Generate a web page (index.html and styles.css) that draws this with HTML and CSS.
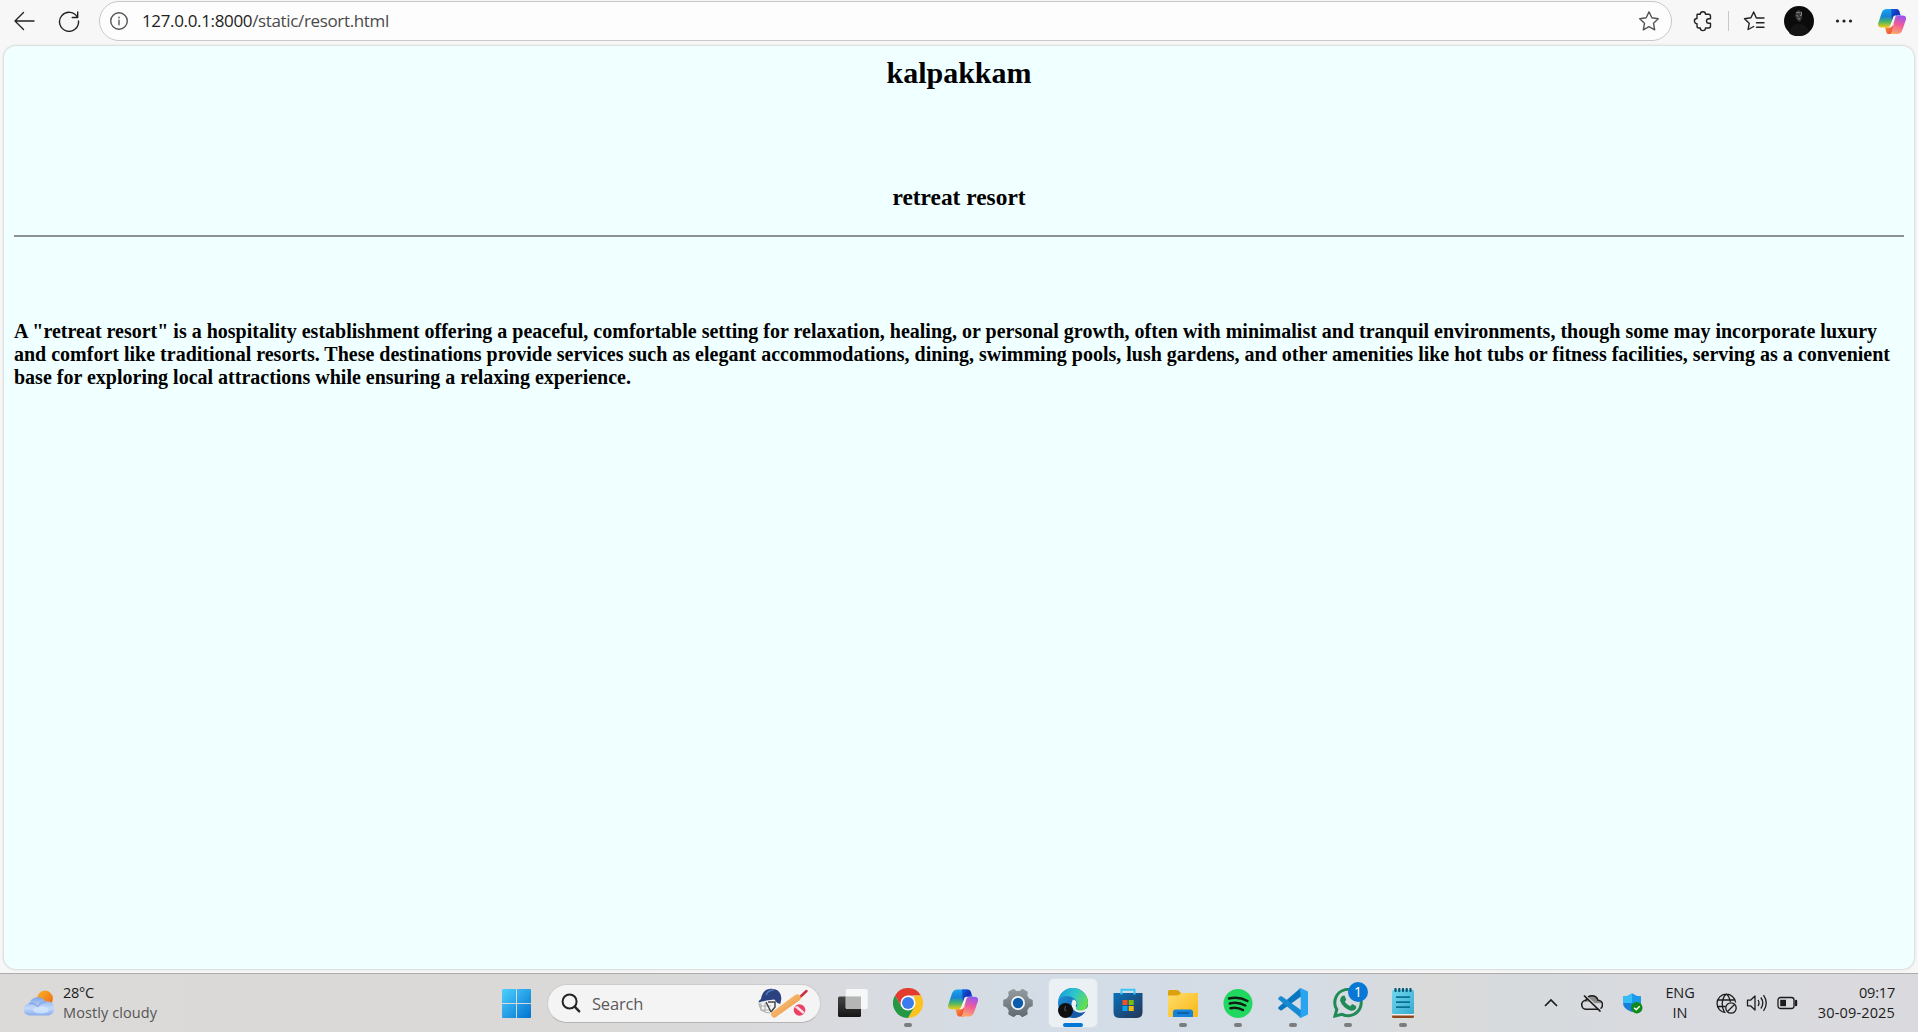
FILE: index.html
```html
<!DOCTYPE html>
<html lang="en">
<head>
<meta charset="utf-8">
<title>resort</title>
<link rel="stylesheet" href="styles.css">
</head>
<body>
<svg class="defs" aria-hidden="true">
  <defs>
    <linearGradient id="cpA" x1="0" y1="0" x2="0" y2="1"><stop offset="0" stop-color="#18a5f2"/><stop offset=".4" stop-color="#1683d8"/><stop offset=".68" stop-color="#45b56b"/><stop offset="1" stop-color="#f2cb12"/></linearGradient>
    <linearGradient id="cpB" x1=".6" y1="0" x2=".3" y2="1"><stop offset="0" stop-color="#9c55ee"/><stop offset=".45" stop-color="#ef5b9b"/><stop offset="1" stop-color="#ffad67"/></linearGradient>
    <linearGradient id="cpC" x1="0" y1="0" x2="1" y2="1"><stop offset="0" stop-color="#1462da"/><stop offset=".5" stop-color="#102fb8"/><stop offset="1" stop-color="#2480e8"/></linearGradient>
    <linearGradient id="cpD" x1="0" y1="0" x2="1" y2="1"><stop offset="0" stop-color="#ffb035"/><stop offset="1" stop-color="#e93c3c"/></linearGradient>
    <symbol id="copilot" viewBox="0 0 30 28">
      <path fill="url(#cpA)" d="M9.500.5H19c2 0 2.700 1 2.300 3L16.500 16.500c-1 2.700-2.500 3.800-5 3.800H3.500C.5 20.300-.5 18.300.3 15.500L4 4.500C5 1.700 6.700.5 9.500.5Z"/>
      <path fill="url(#cpC)" d="M14 .5h5.500c2 0 3 1 3.600 3l1.300 4.200h-4c-2 0-3 .8-3.700 2.600L15 14.500Z"/>
      <path fill="url(#cpD)" d="M7.500 20.300h4c1.500 0 2.500-.7 3.200-1.800l1.500-3.800L16 27.500h-4.700c-1.300 0-2-.9-2.400-2Z"/>
      <path fill="url(#cpB)" d="M20.500 27.500h-9c2 0 2.700-1 3.300-3L18 11.500c.9-2.700 2-3.800 4.500-3.800h4c3 0 4.200 2 3.300 4.800L26 23.500c-1 2.800-2.700 4-5.500 4Z"/>
      <path class="copilot-gap" d="M20 7.700h-1.500c-1.300 0-2 .8-2.500 2.200L13.800 16.500c-.9 2.300-1.700 3.800-3.300 3.800h2.500c1.600 0 2.600-1.300 3.100-3l2-6.500c.5-1.700 1-2.600 1.900-3.100Z"/>
    </symbol>
  </defs>
</svg>
<header class="toolbar">
  <svg class="ic back" width="22" height="20" viewBox="0 0 22 20"><path d="M10.500 1.500 2 10l8.500 8.500M2 10h19"/></svg>
  <svg class="ic reload" width="22" height="22" viewBox="0 0 22 22"><path d="M19.500 7.500A9.500 9.500 0 1 0 20.500 11M19.700 2v5.500h-5.500"/></svg>
  <div class="address">
    <svg class="ic info" width="20" height="20" viewBox="0 0 20 20"><circle cx="10" cy="10" r="8.300"/><path d="M10 9.200v4.600M10 6.100v.8"/></svg>
    <span class="url">127.0.0.1:8000<span class="path">/static/resort.html</span></span>
    <svg class="ic star" width="22" height="22" viewBox="0 0 22 22"><path d="m11 1.800 2.800 6 6.500.9-4.800 4.600 1.200 6.500-5.700-3.200-5.700 3.200 1.200-6.500L1.700 8.700l6.500-.9Z"/></svg>
  </div>
  <svg class="ic ext" width="20" height="22" viewBox="0 0 20 22"><path d="M4.500 4.300H7.300A2.600 2.600 0 0 1 12.500 4.300H15.500Q17.500 4.300 17.500 6.300V8.700H15.800A2.300 2.300 0 0 0 15.800 13.300H17.500V16Q17.500 18 15.500 18H12.500A2.600 2.600 0 0 1 7.300 18H6Q4 18 4 16V13.700A2.600 2.600 0 0 1 4 8.500V5Q4 4.300 4.500 4.300Z"/></svg>
  <span class="divider"></span>
  <svg class="ic favs" width="22" height="22" viewBox="0 0 22 22"><path d="M13.200 7.800 10.700 2 7.900 7.800 1.500 8.700l4.700 4.600-1.100 6.200 5.600-3M13.500 8h7.500M13.500 12.700H21M13.500 17.200H21"/></svg>
  <svg class="avatar" width="30" height="30" viewBox="0 0 30 30"><circle cx="15" cy="15" r="15" fill="#0b0b0c"/><path d="M5 27q2-9 10-9t10 8a15 15 0 0 1-20 1" fill="#151516"/><path d="m12 6 3-2 3 2v6l-2 4-3-2-2-4z" fill="#39393a"/><path d="m12 7 2-1 2 1M12.500 9.500l2 .8M16 9.500h1.500M14 13l2-.5M17.500 6v3" stroke="#888" fill="none"/></svg>
  <svg class="dots" width="18" height="6" viewBox="0 0 18 6"><g fill="#222"><circle cx="2.500" cy="3" r="1.600"/><circle cx="9" cy="3" r="1.600"/><circle cx="15.500" cy="3" r="1.600"/></g></svg>
  <svg class="side-copilot" width="28" height="27"><use href="#copilot"/></svg>
</header>

<main class="page">
  <h2>kalpakkam</h2>
  <h3>retreat resort</h3>
  <hr>
  <h4>A "retreat resort" is a hospitality establishment offering a peaceful, comfortable setting for relaxation, healing, or personal growth, often with minimalist and tranquil environments, though some may incorporate luxury and comfort like traditional resorts. These destinations provide services such as elegant accommodations, dining, swimming pools, lush gardens, and other amenities like hot tubs or fitness facilities, serving as a convenient base for exploring local attractions while ensuring a relaxing experience.</h4>
</main>

<footer class="taskbar">
  <div class="weather">
    <svg width="30" height="26" viewBox="0 0 30 26"><defs><linearGradient id="sun" x1="0" y1="0" x2="1" y2="1"><stop offset="0" stop-color="#f8b62c"/><stop offset="1" stop-color="#ed6410"/></linearGradient><linearGradient id="cl" x1="0" y1="0" x2="0" y2="1"><stop offset="0" stop-color="#80a4e8"/><stop offset=".6" stop-color="#c4daf9"/><stop offset="1" stop-color="#89acef"/></linearGradient></defs><circle cx="21" cy="8.500" r="7.900" fill="url(#sun)"/><path fill="url(#cl)" d="M6 25.500a6 6 0 0 1-.8-12A9 9 0 0 1 21.500 11.500 7 7 0 0 1 25 25.500Z"/><path d="M5 14q5-2 9 3 2-5 8-5" fill="none" stroke="#80a3e5" stroke-width="1.200"/><ellipse cx="17" cy="20" rx="8" ry="3.500" fill="#d9e9fc" opacity=".7"/></svg>
    <div class="weather-text"><span class="temp">28°C</span><span class="sky">Mostly cloudy</span></div>
  </div>
  <svg class="start" width="29" height="29" viewBox="0 0 29 29"><defs><linearGradient id="win" gradientUnits="userSpaceOnUse" x1="0" y1="0" x2="29" y2="29"><stop offset="0" stop-color="#4fd1ff"/><stop offset="1" stop-color="#0072d0"/></linearGradient></defs><path fill="url(#win)" d="M1 0H14V14H0V1Q0 0 1 0ZM15 0H28Q29 0 29 1V14H15ZM0 15H14V29H1Q0 29 0 28ZM15 15H29V28Q29 29 28 29H15Z"/></svg>
  <div class="search">
    <svg width="20" height="20" viewBox="0 0 20 20"><circle cx="8.600" cy="8.500" r="7" fill="none" stroke="#242424" stroke-width="2"/><path d="m13.700 13.700 4.500 4.600" stroke="#242424" stroke-width="2.400" stroke-linecap="round"/></svg>
    <span class="hint">Search</span>
    <svg class="cricket" width="50" height="30" viewBox="0 0 50 30"><defs><linearGradient id="bat" x1="0" y1="0" x2="1" y2="1"><stop offset="0" stop-color="#ffd18b"/><stop offset="1" stop-color="#e78b37"/></linearGradient></defs><path d="M1 15q1 10 11 10M3 15v7M7 15v9M1 18h12M2 22h11" fill="none" stroke="#aeb2b2" stroke-width="1.200"/><path d="m8 14 5 10M10 14h7v5l-4 5" fill="none" stroke="#44484b" stroke-width="1.500"/><path fill="#2a4380" d="M3 11C4 5 7 1 13 .8 20 .7 23.500 5 23.300 11l-1 5-3-1-3-3.500-8 1-7.500 2Q0 13 3 11Z"/><path d="M8 7q2-5 8-5" stroke="#5877b7" stroke-width="1.500" fill="none"/><path d="m41 10 7.500-7" stroke="#cf2942" stroke-width="2.400" stroke-linecap="round"/><path fill="url(#bat)" d="m13 25 24-18 3-1 3 3-1 3-24 17q-3 2-5-2Z"/><circle cx="41.500" cy="22" r="5.800" fill="#eb4262"/><path d="m36.500 19 8.500 7 1.500-2-7-6Z" fill="#ffe0ed"/></svg>
  </div>
  <nav class="apps">
    <div class="app"><svg width="30" height="30" viewBox="0 0 30 30"><defs><linearGradient id="tv" x1="0" y1="0" x2="0" y2="1"><stop offset="0" stop-color="#454545"/><stop offset="1" stop-color="#161616"/></linearGradient></defs><rect y="8.500" width="23" height="20.500" rx="1.500" fill="url(#tv)"/><rect x="7.700" y="1" width="22" height="20" rx="1.500" fill="#fafafa" opacity=".9"/><path d="M7.700 8.500H23V21H9q-1.300 0-1.300-1.300Z" fill="#b5b5b5"/></svg></div>
    <div class="app running"><svg width="30" height="30" viewBox="0 0 30 30"><path fill="#e33b2e" d="M2 7.500A15 15 0 0 1 28 7.500H15L8.500 18.700Z"/><path fill="#fcc31e" d="M28 7.500A15 15 0 0 1 15 30L21.500 18.700V7.500Z"/><path fill="#269745" d="M2 7.500A15 15 0 0 0 15 30L21.500 18.700H8.500Z"/><circle cx="15" cy="15" r="7.500" fill="#fff"/><circle cx="15" cy="15" r="6" fill="#3b7cec"/></svg></div>
    <div class="app"><svg width="30" height="28"><use href="#copilot"/></svg></div>
    <div class="app"><svg width="30" height="30" viewBox="0 0 30 30"><defs><linearGradient id="gear" x1="0" y1="0" x2="0" y2="1"><stop offset="0" stop-color="#929a9f"/><stop offset="1" stop-color="#626b71"/></linearGradient></defs><path fill="url(#gear)" stroke="url(#gear)" stroke-width="1.500" stroke-linejoin="round" d="m10.500 1.700 2.500 2h4l2.500-2 4.500 2.500-.5 3.500 2 3.300 3.500 1.500v5l-3.500 1.500-2 3.300.5 3.500-4.500 2.500-2.500-2h-4l-2.500 2L6 25.800l.5-3.500-2-3.300L1 17.500v-5L4.500 11l2-3.300L6 4.200Z"/><circle cx="15" cy="15" r="7" fill="#f2f4f5"/><circle cx="15" cy="15" r="5.200" fill="#0c5cad"/></svg></div>
    <div class="app active"><svg width="30" height="30" viewBox="0 0 30 30"><defs><linearGradient id="edgeA" x1="0" y1=".2" x2="1" y2=".6"><stop offset="0" stop-color="#199cd7"/><stop offset=".5" stop-color="#2fc5cd"/><stop offset="1" stop-color="#66df48"/></linearGradient><linearGradient id="edgeB" x1="0" y1="0" x2="1" y2="1"><stop offset="0" stop-color="#1e9bdf"/><stop offset="1" stop-color="#124b97"/></linearGradient></defs><circle cx="15" cy="15" r="15" fill="url(#edgeB)"/><path fill="#ebf0f4" d="M15 11.500Q19 12 18.500 16q-1.800 2.500.3 4 4 2.500 9.200.8L31 18v4.500l-3 1Q20 27 15 21q-3-5 0-9.500Z"/><path fill="url(#edgeA)" d="M.3 12A15 15 0 0 1 30 14c0 6-3.500 8.700-7.500 8.500-4 0-5.500-1.800-4-3.800 1.500-3.500.5-6-2.500-8.200C11 6.500 3.500 7.500.3 12Z"/><path fill="#155ba7" d="M12.500 15q-1 9.500 9 10 3.500 0 6-1.500Q22 31 14 29.500 8 22 12.500 15Z"/><circle cx="7.500" cy="22.500" r="7.500" fill="#101010"/><path d="m7.500 18-1 4 2 1" stroke="#555" fill="none"/></svg></div>
    <div class="app"><svg width="30" height="30" viewBox="0 0 30 30"><defs><linearGradient id="store" x1="0" y1="0" x2="1" y2="1"><stop offset="0" stop-color="#0872bb"/><stop offset="1" stop-color="#263455"/></linearGradient></defs><path fill="url(#store)" d="M.5 5H29.500V24q0 6-6 6H6.500q-6 0-6-6Z"/><path d="M8.500 6.500V1.800H21.500V6.500" fill="none" stroke="#39c6f5" stroke-width="2"/><path d="M9.500 12h5v5h-5z" fill="#f15128"/><path d="M15.700 12h5v5h-5z" fill="#80bd08"/><path d="M9.500 18h5v5h-5z" fill="#08a5ee"/><path d="M15.700 18h5v5h-5z" fill="#fdb80c"/></svg></div>
    <div class="app running"><svg width="30" height="30" viewBox="0 0 30 30"><defs><linearGradient id="folder" x1="0" y1="0" x2="1" y2="1"><stop offset="0" stop-color="#ffdd6d"/><stop offset="1" stop-color="#f9b713"/></linearGradient></defs><path fill="#dda10c" d="M0 3.500Q0 2 1.500 2H9q1 0 2 1l2 2v4H0Z"/><path fill="url(#folder)" d="M0 7.500h9q1.500 0 2.500-1L13 5H30V27.500Q30 29 28.500 29H1.500Q0 29 0 27.500Z"/><path d="M5 29v-5q0-2.500 2.500-2.500H22.500Q25 21.500 25 24v5Z" fill="#1682da"/><path d="M9 25H21" stroke="#085999" stroke-width="1.600"/></svg></div>
    <div class="app running"><svg width="30" height="30" viewBox="0 0 30 30"><circle cx="15" cy="15.500" r="14.500" fill="#20d760"/><path d="M6 10.500q9.500-2.500 18.500 2.500M6.800 15.500q8-2 15.500 2M7.500 20.200q6.500-1.700 12.500 1.800" fill="none" stroke="#111c15" stroke-width="2.500" stroke-linecap="round"/></svg></div>
    <div class="app running"><svg width="30" height="30" viewBox="0 0 30 30"><path fill="#0877bf" d="m22.500 0 .5 8.500L3.500 22.500 2 22.200.3 20.500v-1.300Z"/><path fill="#168bd3" d="m.3 10 1.900-1.800 1.500.1L23 22v8L.3 11.300Z"/><path fill="#29a4f1" d="M22.500 0 30 3.400V26.500L22.500 30l-2-1.200q2.200 0 2.200-2V3.200q0-2-2.200-2Z"/></svg></div>
    <div class="app running"><svg width="30" height="30" viewBox="0 0 30 30"><path d="M2 28 3.800 21.500A13.200 13.200 0 1 1 9 26.300Z" fill="none" stroke="#218b57" stroke-width="3"/><path fill="#218b57" d="m9 8 2.500-.5 1.800 4.200-1.500 2q2 3 5.500 4.500l1.800-2.200 4 2v2.500q-2 3-6 2Q9.500 19.500 7 12.500 7 10 9 8Z"/></svg><span class="badge">1</span></div>
    <div class="app running"><svg width="30" height="30" viewBox="0 0 30 30"><defs><linearGradient id="note" x1="0" y1="0" x2="1" y2="1"><stop offset="0" stop-color="#73d7ee"/><stop offset="1" stop-color="#35acd0"/></linearGradient></defs><path d="M4 26H26V28.500Q26 30 24.500 30H5.500Q4 30 4 28.500Z" fill="#91491b"/><path d="M4 25H26V27.500H4Z" fill="#f7eee9"/><rect x="4" y="2" width="22" height="24" rx="1.200" fill="url(#note)"/><path d="M8 9.200H22M8 14.200H22M8 19.200H22" stroke="#097097" stroke-width="1.800"/><path d="M7.500 1v2M11.300 1v2M15 1v2M18.700 1v2M22.500 1v2" stroke="#075978" stroke-width="2.300" stroke-linecap="round"/></svg></div>
  </nav>
  <div class="tray">
    <svg class="chev" width="14" height="10" viewBox="0 0 14 10"><path d="m1 8 6-6 6 6" fill="none" stroke="#1c1c1c" stroke-width="1.700"/></svg>
    <svg class="cloud" width="22" height="18" viewBox="0 0 22 18"><path d="M5.500 15.200A4.500 4.500 0 0 1 5 6.200q1.500-4.400 6-4.400t6 4.400a4.500 4.500 0 0 1 0 9Z" fill="#d9dade"/><path d="M5 6.200q1.500-4.400 6-4.400t6 4.400q3 .3 4 3-6-.5-8 .3Q9 6 3 8.500Z" fill="#8c8c8c"/><path d="M5.500 15.200A4.500 4.500 0 0 1 5 6.200q1.500-4.400 6-4.400t6 4.400a4.500 4.500 0 0 1 0 9Z" fill="none" stroke="#1c1c1c" stroke-width="1.600"/><path d="m4.500 1.500 16 15" stroke="#d9dade" stroke-width="1.500"/><path d="m3 1.500 16.500 16" stroke="#1c1c1c" stroke-width="1.700"/></svg>
    <svg class="shield" width="20" height="21" viewBox="0 0 20 21"><path d="M9 .5Q13 3.500 18 3.500V10q0 6-9 9Q0 16 0 10V3.500q5 0 9-3Z" fill="#167fdc"/><path d="M9 .5V10H0V3.500q5 0 9-3Z" fill="#35bdf5"/><path d="M9 .5Q13 3.500 18 3.500V10H9Z" fill="#1a9bea"/><circle cx="13.800" cy="14.800" r="5.700" fill="#118a1c"/><path d="m11.200 14.800 2 2 3.500-3.600" fill="none" stroke="#fff" stroke-width="1.500"/></svg>
    <div class="lang"><span>ENG</span><span>IN</span></div>
    <svg class="line globe" width="21" height="21" viewBox="0 0 21 21"><path d="M9.500 19.700A9.300 9.300 0 1 1 19.600 9.500M1.700 7H19M1.500 13.500H9.500M8.500 19Q5.500 14 6.500 8 7.500 3 10.300 1q3 2 4 8"/><circle cx="15" cy="15" r="5.200"/><path d="m11.500 18.500 7-7"/></svg>
    <svg class="line speaker" width="22" height="20" viewBox="0 0 22 20"><path d="M1.500 7.200H4.500L9 3V17L4.500 12.800H1.500ZM12 7q2 3 0 6M14.800 4.500q4 5.500 0 11M17.500 2.200q5.500 7.800 0 15.600"/></svg>
    <svg class="line battery" width="21" height="14" viewBox="0 0 21 14"><rect x="1" y="1.500" width="16" height="11" rx="2.500"/><path d="M3.200 3.800H9V10.200H3.200Z" fill="#1c1c1c" stroke="none"/><path d="M19 5v4" stroke-width="2.400" stroke-linecap="round"/></svg>
    <div class="clock"><span>09:17</span><span class="date">30-09-2025</span></div>
  </div>
</footer>
</body>
</html>
```
FILE: styles.css
```css
* { box-sizing: border-box; }
body {
  margin: 0;
  width: 1918px;
  height: 1032px;
  overflow: hidden;
  display: flex;
  flex-direction: column;
  background: #f7f7f7;
  font-family: "Open Sans", "Noto Sans", sans-serif;
}
.defs { position: absolute; width: 0; height: 0; }
svg { display: block; flex: none; }

.toolbar {
  height: 42px;
  flex: none;
  display: flex;
  align-items: center;
  padding-left: 13px;
}
.ic { fill: none; stroke: #222; stroke-width: 1.4; stroke-linejoin: round; stroke-linecap: round; }
.reload { margin-left: 23px; }
.address {
  width: 1573px;
  height: 40px;
  margin-left: 19px;
  border: 1px solid #c8c8c8;
  border-radius: 20px;
  background: #fdfdfd;
  display: flex;
  align-items: center;
  padding: 0 11px 0 9px;
}
.info, .star { stroke: #555; }
.url { margin-left: 13px; font-size: 17px; letter-spacing: -0.35px; line-height: 24px; color: #222; }
.path { color: #4a4a4a; }
.star { margin-left: auto; }
.ext { margin-left: 21px; }
.divider { width: 1px; height: 20px; margin-left: 15px; background: #c8c8c8; }
.favs { margin-left: 14px; }
.avatar { margin-left: 19px; }
.dots { margin-left: 21px; }
.side-copilot { margin-left: 25px; }
.copilot-gap { fill: #f5f3f5; }

.page {
  width: 1910px;
  height: 923px;
  margin: 4px 0 0 4px;
  flex: none;
  padding: 10px 10px 0;
  border-radius: 12px;
  background: #f0ffff;
  box-shadow: 0 0 2px 1px #d8d8d8;
  color: #000;
  font-family: "Liberation Serif", "Times New Roman", serif;
}
.page h2 { margin: 0; font-size: 30px; line-height: 34px; text-align: center; }
.page h3 { margin: 94px 0 24px; font-size: 23.4px; line-height: 27px; text-align: center; }
.page hr { height: 2px; margin: 0; border: solid; border-width: 1px 0; border-color: #8e9292 #eeeeee; }
.page h4 { margin: 83px 0 0; font-size: 20px; line-height: 23px; }

.taskbar {
  height: 59px;
  margin-top: 4px;
  flex: none;
  display: flex;
  align-items: center;
  border-top: 1px solid #ababab;
  background: linear-gradient(90deg, #dbdad9 0, #dad9d8 600px, #d9dade 820px, #d3dde7 1060px, #d4dce5 1300px, #dadada 1430px, #d6dadd 1530px, #d9dadf 1700px, #dadade 100%);
}
.weather { width: 502px; padding-left: 24px; display: flex; align-items: center; gap: 9px; }
.weather-text { display: flex; flex-direction: column; font-size: 14.5px; line-height: 20px; }
.temp { color: #1c1c1c; letter-spacing: -0.3px; }
.sky { color: #555; letter-spacing: 0.1px; }
.search {
  width: 274px;
  height: 39px;
  margin-left: 16px;
  padding: 0 12px 0 13px;
  border: 1px solid #ccc;
  border-bottom-color: #b4b4b4;
  border-radius: 20px;
  background: #f4f4f4;
  display: flex;
  align-items: center;
}
.hint { margin-left: 11px; font-size: 16.5px; letter-spacing: -0.2px; color: #5a5a5a; }
.cricket { margin-left: auto; }

.apps { margin-left: 4px; display: flex; }
.app { position: relative; width: 55px; height: 48px; display: flex; align-items: center; justify-content: center; }
.app svg { position: relative; z-index: 1; }
.running::after, .active::after {
  content: "";
  position: absolute;
  left: 24px;
  bottom: 0;
  width: 8px;
  height: 4px;
  border-radius: 2px;
  background: #7b7c7e;
}
.active::after { left: 18px; width: 20px; background: #0078d4; }
.active::before {
  content: "";
  position: absolute;
  inset: 0 3.5px;
  border-radius: 5px;
  background: #ebf0f4;
  box-shadow: 0 0 1px 1px #dde1e6;
}
.badge {
  position: absolute;
  z-index: 2;
  left: 28px;
  top: 3px;
  width: 20px;
  height: 20px;
  border-radius: 50%;
  background: #0878d4;
  color: #fff;
  font-size: 14px;
  line-height: 20px;
  text-align: center;
}

.tray { margin-left: auto; padding-right: 23px; display: flex; align-items: center; color: #1c1c1c; font-size: 14.5px; line-height: 20px; }
.chev { margin-right: 1px; }
.cloud { margin-left: 22px; }
.shield { margin-left: 20px; }
.lang { width: 36px; margin-left: 19px; display: flex; flex-direction: column; align-items: center; letter-spacing: -0.1px; }
.line { fill: none; stroke: #1c1c1c; stroke-width: 1.3; stroke-linejoin: round; }
.globe { margin-left: 18px; }
.speaker { margin-left: 9px; }
.battery { margin-left: 9px; }
.clock { width: 97px; display: flex; flex-direction: column; align-items: flex-end; letter-spacing: -0.2px; }
.date { letter-spacing: 0.15px; }
```
